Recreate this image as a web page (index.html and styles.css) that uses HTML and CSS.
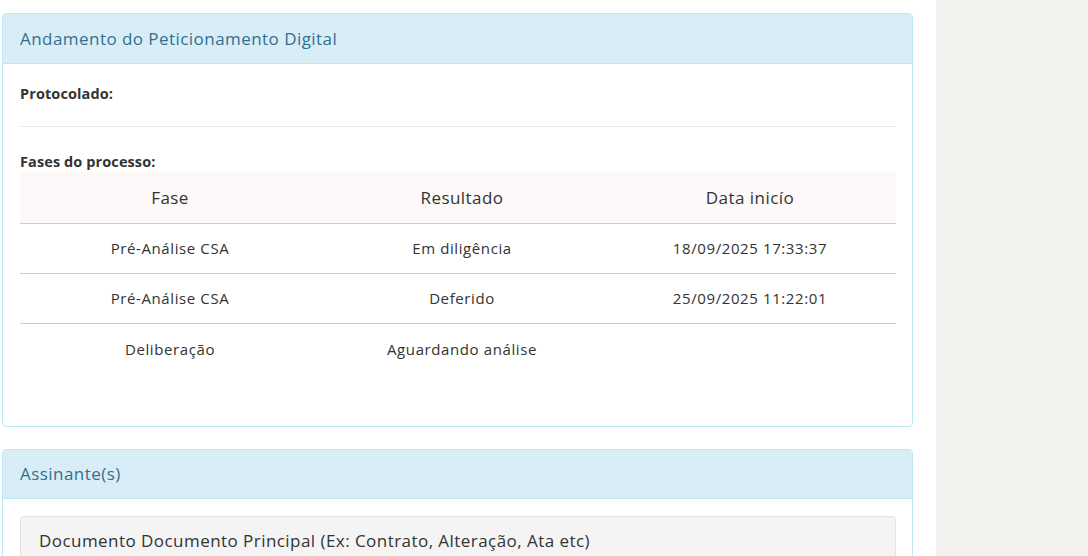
FILE: index.html
```html
<!DOCTYPE html>
<html lang="pt-BR">
<head>
    <meta charset="UTF-8">
    <meta name="viewport" content="width=device-width, initial-scale=1.0">
    <title>Andamento do Peticionamento Digital</title>
    <link rel="stylesheet" href="styles.css">
</head>
<body>

<div class="page">
    <div class="main">

        <div class="panel">
            <div class="panel-heading">Andamento do Peticionamento Digital</div>
            <div class="panel-body andamento">
                <div class="label">Protocolado:</div>
                <hr>
                <div class="label">Fases do processo:</div>
                <table class="fases">
                    <thead>
                        <tr>
                            <th class="c1">Fase</th>
                            <th class="c2">Resultado</th>
                            <th class="c3">Data inicío</th>
                        </tr>
                    </thead>
                    <tbody>
                        <tr>
                            <td>Pré-Análise CSA</td>
                            <td>Em diligência</td>
                            <td>18/09/2025 17:33:37</td>
                        </tr>
                        <tr>
                            <td>Pré-Análise CSA</td>
                            <td>Deferido</td>
                            <td>25/09/2025 11:22:01</td>
                        </tr>
                        <tr class="last">
                            <td>Deliberação</td>
                            <td>Aguardando análise</td>
                            <td></td>
                        </tr>
                    </tbody>
                </table>
            </div>
        </div>

        <div class="panel">
            <div class="panel-heading small">Assinante(s)</div>
            <div class="panel-body">
                <div class="well">Documento Documento Principal (Ex: Contrato, Alteração, Ata etc)</div>
            </div>
        </div>

    </div>
    <div class="side"></div>
</div>

</body>
</html>
```

FILE: styles.css
```css
* {margin:0;padding:0;box-sizing:border-box;}
html,body {width:100%;height:100%;}
body {
    font-family: "Open Sans", "Lato", sans-serif;
    letter-spacing: 0.45px;
    color: #333;
    background: #fff;
    overflow: hidden;
}
.page{
    display: flex;
    height: 100%;
}
.main{
    width: 936px;
    padding: 13px 23px 0 2px;
}
.side{
    flex: 1;
    background: #f2f1ed;
}

/* 面板 */
.panel{
    border: 1px solid #bce8f1;
    border-radius: 4px;
    margin-bottom: 22px;
    background: #fff;
}
.panel-heading{
    background: #d9edf7;
    color: #31708f;
    font-size: 17px;
    line-height: 29px;
    padding: 10px 17px;
    border-bottom: 1px solid #bce8f1;
    border-top-left-radius: 3px;
    border-top-right-radius: 3px;
}
.panel-heading.small{
    line-height: 28px;
}
.panel-body{
    padding: 17px 16px 17px 17px;
}
.andamento{
    padding-top: 19px;
    padding-bottom: 51px;
}
.label{
    font-size: 14.5px;
    font-weight: 700;
    line-height: 21px;
    letter-spacing: 0.1px;
}
hr{
    border: 0;
    border-top: 1px solid #eeeae6;
    margin: 22px 0 24px;
}

/* 表格 */
.fases{
    width: 100%;
    border-collapse: collapse;
    table-layout: fixed;
}
.fases th{
    background: #fdf9f8;
    font-size: 17px;
    font-weight: 400;
    height: 51px;
    border-bottom: 1px solid #d3cbbd;
}
.fases .c1{width: 300px;}
.fases .c2{width: 284px;}
.fases td{
    text-align: center;
    font-size: 15px;
    letter-spacing: 0.6px;
    height: 50px;
    border-bottom: 1px solid #d3cbbd;
}
.fases tr.last td{
    border-bottom: 0;
    height: 52px;
}

.well{
    background: #f4f4f4;
    border: 1px solid #e3e3e3;
    border-radius: 4px;
    padding: 12px 18px;
    font-size: 17px;
    line-height: 24px;
}
```
